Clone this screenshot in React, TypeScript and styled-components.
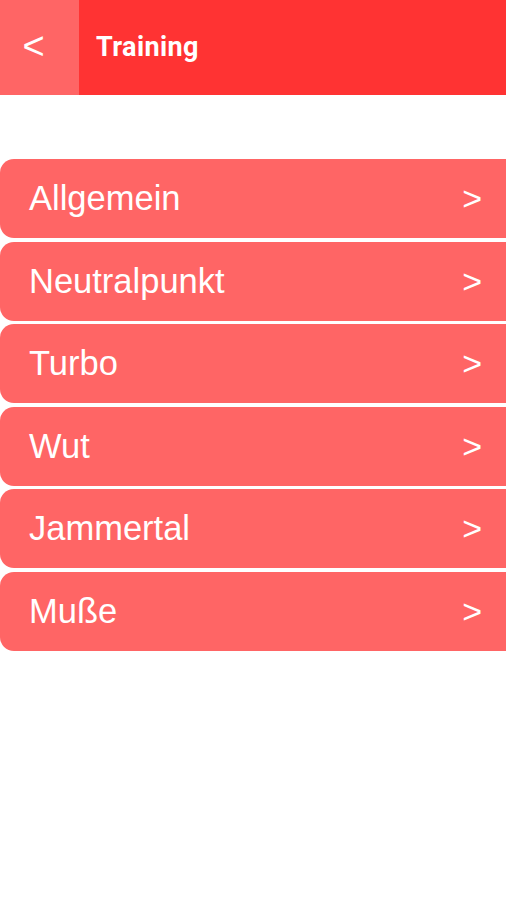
import React from "react";
import styled, { createGlobalStyle } from "styled-components";

const GlobalStyle = createGlobalStyle`
  body {
    margin: 0;
    background: #ffffff;
    font-family: "Liberation Sans", Arial, sans-serif;
  }
`;

const Page = styled.div`
  width: 100%;
  min-height: 900px;
  display: flex;
  flex-direction: column;
`;

const Header = styled.header`
  height: 95px;
  display: flex;
  align-items: stretch;
  background: #ff3333;
`;

const BackButton = styled.div`
  width: 79px;
  display: flex;
  align-items: center;
  justify-content: center;
  background: #ff6565;
  color: #ffffff;
  font-size: 38px;
  padding-right: 12px;
  padding-bottom: 2px;
  box-sizing: border-box;
`;

const Title = styled.h1`
  margin: 0 0 0 17px;
  display: flex;
  align-items: center;
  color: #ffffff;
  font-family: Roboto, "Liberation Sans", sans-serif;
  font-weight: 700;
  font-size: 27px;
  letter-spacing: 0.4px;
  padding-bottom: 1px;
`;

const List = styled.nav`
  margin-top: 64px;
  display: flex;
  flex-direction: column;
  gap: 3.5px;
`;

const Row = styled.div`
  height: 79px;
  display: flex;
  align-items: center;
  justify-content: space-between;
  padding: 0 24px 0 29px;
  background: #ff6565;
  border-radius: 14px 0 0 14px;
  color: #ffffff;
  font-size: 34.5px;
`;

const Arrow = styled.span`
  font-size: 34px;
`;

const items = ["Allgemein", "Neutralpunkt", "Turbo", "Wut", "Jammertal", "Muße"];

export default function App() {
  return (
    <Page>
      <GlobalStyle />
      <Header>
        <BackButton>&lt;</BackButton>
        <Title>Training</Title>
      </Header>
      <List>
        {items.map((item) => (
          <Row key={item}>
            <span>{item}</span>
            <Arrow>&gt;</Arrow>
          </Row>
        ))}
      </List>
    </Page>
  );
}
